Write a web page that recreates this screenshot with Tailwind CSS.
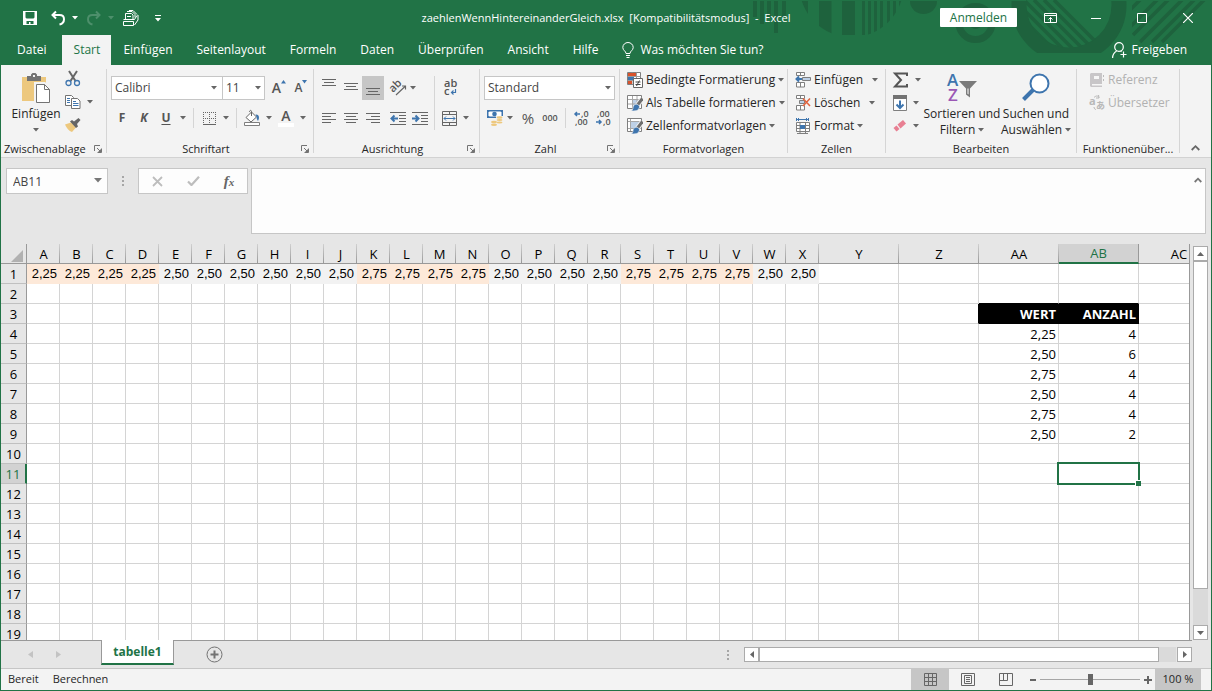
<!DOCTYPE html>
<html lang="de">
<head>
  <meta charset="UTF-8">
  <meta name="viewport" content="width=device-width, initial-scale=1.0">
  <title>zaehlenWennHintereinanderGleich.xlsx - Excel</title>
  <script src="https://cdn.jsdelivr.net/npm/@tailwindcss/browser@4"></script>
</head>
<body class="h-screen flex flex-col overflow-hidden border-x border-b border-[#217346] bg-[#e6e6e6] font-['Open_Sans','Noto_Sans',sans-serif] text-[12px] leading-4 text-[#262626]">

  <!-- Shared icons -->
  <svg class="hidden">
    <symbol id="arrow" viewBox="0 0 6 4"><path d="M0 0h6L3 3.5z" fill="currentColor"/></symbol>
    <symbol id="launcher" viewBox="0 0 8 8"><path d="M.5 6V.5H6M3 3l4 4M7.5 3.500v4h-4" fill="none" stroke="currentColor"/><path d="M7 4v3H4z" fill="currentColor"/></symbol>
    <symbol id="brushgrid" viewBox="0 0 16 16">
      <path d="M.5.5h14v13H.5z" fill="#fff"/>
      <path d="M5 4h6v6H5z" fill="#bdd0e6"/>
      <path d="M.5.5h14v13H.5z" fill="none" stroke="#7f7f7f"/>
      <path d="M1 4.500h13M5.500 1v12M10 1v12M1 9h13" stroke="#a6a6a6"/>
      <path d="M15.500 3.500L10.500 10" stroke="#f1f1f1" stroke-width="5"/>
      <path d="M15.500 3.500L10.500 10" stroke="#6e6e6e" stroke-width="3"/>
      <path d="M11 9.500c-3-1-5 1-5 3.500 0 1.500-.8 2-2 2.500 3 1 8.500.5 8.500-4z" fill="#3e75ae" stroke="#f1f1f1" stroke-width=".6"/>
    </symbol>
    <symbol id="stylegrid" viewBox="0 0 16 16">
      <path d="M.5.5h14v13H.5z" fill="#fff"/>
      <path d="M4 4h8v6H4z" fill="#bdd0e6"/>
      <path d="M.5.5h14v13H.5z" fill="none" stroke="#7f7f7f"/>
      <path d="M1 3.500h13M3.500 1v12M1 10.500h13" stroke="#a6a6a6"/>
      <path d="M15.500 3.500L10.500 10" stroke="#f1f1f1" stroke-width="5"/>
      <path d="M15.500 3.500L10.500 10" stroke="#6e6e6e" stroke-width="3"/>
      <path d="M11 9.500c-3-1-5 1-5 3.500 0 1.500-.8 2-2 2.500 3 1 8.500.5 8.500-4z" fill="#3e75ae" stroke="#f1f1f1" stroke-width=".6"/>
    </symbol>
  </svg>

  <!-- Title bar and tabs -->
  <header class="relative bg-[#217346] text-white shrink-0">
    <svg class="absolute right-0 top-0 w-[461px] h-[65px]" viewBox="750 0 461 65" fill="#1e623d">
      <defs>
        <clipPath id="disc"><path d="M799 1h105v34H799z" /></clipPath>
        <clipPath id="round"><circle cx="851.500" cy="-15" r="52.200"/></clipPath>
        <clipPath id="inner"><circle cx="1069" cy="5" r="43"/></clipPath>
        <clipPath id="flat"><path d="M1000 1h140v52h-140z"/></clipPath>
        <clipPath id="corner"><path d="M1132 1h80v43h-80z"/></clipPath>
      </defs>
      <path d="M753 1h4v16h-4zM760 1h4v23h-4zM767 1h4v16h-4zM774 1h4v32h-4zM782 1h4v16h-4z"/>
      <g clip-path="url(#disc)"><path clip-path="url(#round)" d="M800 0h8v40h-8zM819 0h12.500v40H819zM842 0h13v40h-13zM862 0h3v40h-3zM868 0h3v40h-3zM874 0h3v40h-3zM880 0h3v40h-3zM887 0h3v40h-3zM893 0h3v40h-3zM899 0h3v40h-3z"/></g>
      <path d="M910 1a13.500 13 0 0 0 27 0z"/>
      <circle cx="975.500" cy="23" r="16.500" fill="none" stroke="#1e623d" stroke-width="7"/>
      <circle cx="975.500" cy="23" r="6"/>
      <g clip-path="url(#flat)"><circle cx="1069" cy="5" r="50" fill="none" stroke="#1e623d" stroke-width="15"/></g>
      <g clip-path="url(#inner)" stroke="#1e623d" stroke-width="3.500"><path d="M1004 0l60 60M1014 0l60 60M1024 0l60 60M1034 0l60 60M1044 0l60 60M1054 0l60 60"/></g>
      <g clip-path="url(#corner)" stroke="#1e623d" stroke-width="3.500"><path d="M1130 10L1145-5M1130 27L1165-8M1133 35L1175-7M1140 42L1187-5M1152 42L1198-4M1162 42L1212-8"/></g>
    </svg>
    <div class="relative flex items-center h-[35px]">
      <div class="flex-1 flex items-center">
        <button class="ml-[21px] mr-3" aria-label="Speichern"><svg class="w-4 h-4" viewBox="0 0 16 16"><path d="M1 1h14v14H1z" fill="#fff"/><path d="M3.500 2h9v5.500l-1 1h-7l-1-1zM4.500 11h7v3h-3v-2H7v2H4.500z" fill="#217346"/></svg></button>
        <button aria-label="Rückgängig"><svg class="w-4 h-4" viewBox="0 0 16 16" fill="none" stroke="#fff" stroke-width="2"><path d="M6 1.500L2.500 5 6 8.500M3 5h6.500c6 0 6 8 0 9.500"/></svg></button>
        <svg class="ml-1.5 w-[6px] h-1"><use href="#arrow"/></svg>
        <button class="ml-2 text-[#4d8f6b]" aria-label="Wiederholen"><svg class="w-4 h-4" viewBox="0 0 16 16" fill="none" stroke="currentColor" stroke-width="2"><path d="M10 1.500L13.500 5 10 8.500M13 5H6.500c-6 0-6 8 0 9.500"/></svg></button>
        <svg class="ml-1.5 w-[6px] h-1 text-[#4d8f6b]"><use href="#arrow"/></svg>
        <button class="ml-2" aria-label="Drucken"><svg class="w-[17px] h-4" viewBox="0 0 17 16" fill="none" stroke="#fff"><path d="M1.500 11.500h10v4h-10zM1.500 9.500h11l2.500-4M3.500 9V3.500h6L11 5v4M5 1.500h5l3 3v3M7 .5h4l4 4M16 5v5l-3.500 5M5 6.500h4"/></svg></button>
        <button class="ml-4" aria-label="Anpassen"><svg class="w-[6px] h-2" viewBox="0 0 6 8" fill="#fff"><path d="M0 1h6v1H0zM0 4h6L3 7.500z"/></svg></button>
      </div>
      <h1 class="whitespace-pre text-[11px]">zaehlenWennHintereinanderGleich.xlsx  [Kompatibilitätsmodus]  -  Excel</h1>
      <div class="flex-1 flex items-center justify-end h-full">
        <button class="mr-2.5 w-[77px] h-[19px] bg-white text-[#217346] rounded-[1px] flex items-center justify-center">Anmelden</button>
        <button class="w-[46px] flex justify-center" aria-label="Menüband-Anzeigeoptionen"><svg class="w-[13px] h-[10px]" viewBox="0 0 13 10" fill="none" stroke="#fff"><path d="M.5.5h12v9H.5zM.5 2.500h12M6.500 9V4.500M4.500 6.500l2-2 2 2"/></svg></button>
        <button class="w-[46px] flex justify-center" aria-label="Minimieren"><svg class="w-[10px] h-[10px]" viewBox="0 0 10 10"><path d="M0 5h10v1H0z" fill="#fff"/></svg></button>
        <button class="w-[46px] flex justify-center" aria-label="Maximieren"><svg class="w-[10px] h-[10px]" viewBox="0 0 10 10"><path d="M.5.5h9v9h-9z" fill="none" stroke="#fff"/></svg></button>
        <button class="w-[46px] flex justify-center" aria-label="Schließen"><svg class="w-[10px] h-[10px]" viewBox="0 0 10 10"><path d="M0 0l10 10M10 0L0 10" stroke="#fff" stroke-width="1.200"/></svg></button>
      </div>
    </div>
    <nav class="relative flex items-stretch h-[30px] pl-1 pr-6">
      <a href="#" class="px-3 flex items-center">Datei</a>
      <a href="#" class="ml-1 w-[49px] bg-[#f3f3f3] text-[#217346] flex items-center justify-center">Start</a>
      <a href="#" class="px-3 flex items-center">Einfügen</a>
      <a href="#" class="px-3 flex items-center">Seitenlayout</a>
      <a href="#" class="px-3 flex items-center">Formeln</a>
      <a href="#" class="px-3 flex items-center">Daten</a>
      <a href="#" class="px-3 flex items-center">Überprüfen</a>
      <a href="#" class="px-3 flex items-center">Ansicht</a>
      <a href="#" class="px-3 flex items-center">Hilfe</a>
      <a href="#" class="px-3 flex items-center gap-1.5"><svg class="w-3 h-4" viewBox="0 0 12 16" fill="none" stroke="#fff"><path d="M4 11.500C4 9 .8 8.500.8 5.500a5.200 5 0 0 1 10.400 0C11.200 8.500 8 9 8 11.500zM4 13.500h4M4.500 15.500h3"/></svg>Was möchten Sie tun?</a>
      <a href="#" class="ml-auto flex items-center gap-1"><svg class="w-[15px] h-4" viewBox="0 0 15 16" fill="none" stroke="#fff" stroke-width="1.200"><circle cx="7" cy="5" r="4.300"/><path d="M.6 16c0-3.500 1.500-5.500 4-7M8.500 9l1 .8M11.500 9.500v6M8.500 12.500h6"/></svg>Freigeben</a>
    </nav>
  </header>

  <!-- Ribbon -->
  <div class="flex shrink-0 h-[93px] bg-[#f3f3f3] border-b border-[#d2d2d2] text-[#262626] [&_svg]:shrink-0 [&_svg]:overflow-visible">

    <section class="w-[105px] shrink-0 flex flex-col">
      <div class="flex-1 flex">
        <button class="w-[62px] pl-2 pt-2 flex flex-col items-center">
          <svg class="w-[29px] h-[30px]" viewBox="0 0 29 30"><path d="M0 4h24v24H0z" fill="#edc87e"/><path d="M5 3h4V1.500L10.500 0h3L15 1.500V3h4v5H5z" fill="#737373"/><path d="M11 2h2v2h-2z" fill="#f3f3f3"/><path d="M13.500 10.500h9l5 5v14h-14z" fill="#fff" stroke="#f3f3f3" stroke-width="3"/><path d="M14.500 11.500h8l5 5v13h-13zM22.500 11.500v5h5" fill="#fff" stroke="#737373"/></svg>
          <span class="mt-[3px]">Einfügen</span>
          <svg class="mt-1.5 w-[6px] h-1 text-[#666]"><use href="#arrow"/></svg>
        </button>
        <div class="pt-1.5 pl-0.5 flex flex-col gap-[7px]">
          <button class="w-4 h-4" aria-label="Ausschneiden"><svg class="w-4 h-4" viewBox="0 0 16 16" fill="none"><path d="M4 0l6.500 10M12 0L5.500 10" stroke="#666" stroke-width="2"/><circle cx="3.500" cy="12" r="2.500" stroke="#3e75ae" stroke-width="1.300"/><circle cx="12" cy="12" r="2.500" stroke="#3e75ae" stroke-width="1.300"/></svg></button>
          <button class="h-4 flex items-center gap-1.5" aria-label="Kopieren"><svg class="w-4 h-4" viewBox="0 0 16 16" fill="#fff" stroke="#737373"><path d="M.5 1.500h6l2 2v8h-8z"/><path d="M6.500 4.500h6l2.500 2.500v7.500H6.500z"/><path d="M2 4.500h3M2 6.500h3M2 8.500h3M8 7.500h3M8 9.500h5.500M8 11.500h5.500" stroke="#3e75ae"/></svg><svg class="w-[6px] h-1 text-[#666]"><use href="#arrow"/></svg></button>
          <button class="w-4 h-4" aria-label="Format übertragen"><svg class="w-4 h-4" viewBox="0 0 16 16"><path d="M0 7.500l6-2 5 5L7 15c-3-1-5.500-4-7-7.500z" fill="#edc87e"/><path d="M5 4.500l2-1.500 2 1.500L13.500 1l2 2L12 7l1 2.500-2 1.500z" fill="#666"/></svg></button>
        </div>
      </div>
      <div class="h-4 flex items-center justify-between pl-[3px] pr-1 text-[11px]"><span>Zwischenablage</span><button aria-label="Zwischenablage öffnen"><svg class="w-2 h-2 text-[#737373]"><use href="#launcher"/></svg></button></div>
    </section>
    <div class="w-px my-1 h-[84px] bg-[#d5d5d5] shrink-0"></div>

    <section class="w-[206px] shrink-0 flex flex-col pl-1">
      <div class="flex-1 flex flex-col gap-1.5 pt-[11px]">
        <div class="flex items-center">
          <div class="relative">
            <select aria-label="Schriftart" class="appearance-none block w-[112px] h-6 border border-[#c6c6c6] bg-white pl-[3px] text-[#444]"><option>Calibri</option></select>
            <svg class="absolute right-1.5 top-2.5 w-[6px] h-1 text-[#666]"><use href="#arrow"/></svg></div>
          <div class="relative -ml-px">
            <select aria-label="Schriftgrad" class="appearance-none block w-[43px] h-6 border border-[#c6c6c6] bg-white pl-[3px] text-[#444]"><option>11</option></select>
            <svg class="absolute right-1 top-2.5 w-[6px] h-1 text-[#666]"><use href="#arrow"/></svg></div>
          <button class="ml-1.5 w-4 flex items-start justify-center" aria-label="Schriftgrad vergrößern"><span class="text-[14px] text-[#555] font-semibold">A</span><svg class="w-[5px] h-1" viewBox="0 0 5 4"><path d="M0 3.500h5L2.500 0z" fill="#3e75ae"/></svg></button>
          <button class="ml-1.5 w-4 flex items-start justify-center" aria-label="Schriftgrad verkleinern"><span class="text-[12px] text-[#555] font-semibold">A</span><svg class="w-[5px] h-1" viewBox="0 0 5 4"><path d="M0 0h5L2.500 3.500z" fill="#3e75ae"/></svg></button>
        </div>
        <div class="flex items-center h-6 text-[#555]">
          <button class="w-[22px] font-bold">F</button>
          <button class="w-[22px] font-bold italic">K</button>
          <button class="w-[22px] font-bold underline underline-offset-2">U</button>
          <svg class="mx-[3px] w-[6px] h-1 text-[#666]"><use href="#arrow"/></svg>
          <div class="mx-1 w-px h-5 bg-[#d5d5d5]"></div>
          <button class="w-[22px] flex justify-center" aria-label="Rahmen"><svg class="w-[13px] h-[13px]" viewBox="0 0 13 13" fill="none" stroke="#666"><path d="M.5 0v12M6.500 0v12M12.500 0v12M0 .5h13M0 6.500h13" stroke-dasharray="1 1"/><path d="M0 12.500h13"/></svg></button>
          <svg class="mx-[3px] w-[6px] h-1 text-[#666]"><use href="#arrow"/></svg>
          <div class="mx-1 w-px h-5 bg-[#d5d5d5]"></div>
          <button class="w-[22px] flex justify-center" aria-label="Füllfarbe"><svg class="w-4 h-4" viewBox="0 0 16 16"><path d="M2 7.500L7.500 2l5 5L7 12z" fill="#fff" stroke="#666"/><path d="M7.500 6V1.500C7.500 0 5.500 0 5.500 2" fill="none" stroke="#666"/><path d="M11.500 4.500c3.500-.5 4.500 3 2.500 6.500-1-1-1.500-3-1.500-4.500z" fill="#3e75ae"/><path d="M.5 12.500h15v3H.5z" fill="#fff" stroke="#7f7f7f"/></svg></button>
          <svg class="mx-[3px] w-[6px] h-1 text-[#666]"><use href="#arrow"/></svg>
          <button class="w-[22px] flex flex-col items-center" aria-label="Schriftfarbe"><span class="text-[14px] leading-[14px] font-semibold">A</span><span class="w-4 h-1 bg-white"></span></button>
          <svg class="mx-[3px] w-[6px] h-1 text-[#666]"><use href="#arrow"/></svg>
        </div>
      </div>
      <div class="h-4 flex items-center pr-1 text-[11px]"><span class="flex-1 text-center">Schriftart</span><button aria-label="Schriftart öffnen"><svg class="w-2 h-2 text-[#737373]"><use href="#launcher"/></svg></button></div>
    </section>
    <div class="w-px my-1 h-[84px] bg-[#d5d5d5] shrink-0"></div>

    <section class="w-[165px] shrink-0 flex flex-col pl-1">
      <div class="flex-1 flex pt-[11px]">
        <div class="flex flex-col gap-1.5 w-[116px]">
          <div class="flex items-center h-6">
            <button class="w-[22px] h-6 flex justify-center items-center" aria-label="Oben ausrichten"><svg class="w-[14px] h-[18px]" viewBox="0 0 14 18" stroke="#666"><path d="M0 .5h14M2 3.500h10M0 6.500h14"/></svg></button>
            <button class="w-[22px] h-6 flex justify-center items-center" aria-label="Zentriert ausrichten"><svg class="w-[14px] h-[18px]" viewBox="0 0 14 18" stroke="#666"><path d="M0 4.500h14M2 7.500h10M0 10.500h14"/></svg></button>
            <button class="w-[22px] h-6 bg-[#c6c6c6] flex justify-center items-center" aria-label="Unten ausrichten"><svg class="w-[14px] h-[18px]" viewBox="0 0 14 18" stroke="#666"><path d="M0 9.500h14M2 12.500h10M0 15.500h14"/></svg></button>
            <button class="ml-[5px] w-[18px] flex justify-center" aria-label="Ausrichtung"><svg class="w-[17px] h-[16px]" viewBox="0 0 17 16"><text x="0" y="10" transform="rotate(-45 5 8)" font-size="11" font-weight="600" fill="#555">ab</text><path d="M6 15L15.500 6M12 6h3.500v3.500" fill="none" stroke="#666" stroke-width="1.200"/></svg></button>
            <svg class="ml-[3px] w-[6px] h-1 text-[#666]"><use href="#arrow"/></svg>
          </div>
          <div class="flex items-center h-6">
            <button class="w-[22px] flex justify-center" aria-label="Linksbündig"><svg class="w-[14px] h-[10px]" viewBox="0 0 14 10" stroke="#666"><path d="M0 .5h14M0 3.500h9M0 6.500h14M0 9.500h9"/></svg></button>
            <button class="w-[22px] flex justify-center" aria-label="Zentriert"><svg class="w-[14px] h-[10px]" viewBox="0 0 14 10" stroke="#666"><path d="M0 .5h14M2 3.500h10M0 6.500h14M2 9.500h10"/></svg></button>
            <button class="w-[22px] flex justify-center" aria-label="Rechtsbündig"><svg class="w-[14px] h-[10px]" viewBox="0 0 14 10" stroke="#666"><path d="M0 .5h14M5 3.500h9M0 6.500h14M5 9.500h9"/></svg></button>
            <button class="ml-[3px] w-[22px] flex justify-center" aria-label="Einzug verkleinern"><svg class="w-4 h-[13px]" viewBox="0 0 16 13"><path d="M0 .5h16M9 3.500h7M9 6.500h7M9 9.500h7M0 12.500h16" stroke="#666"/><path d="M8 6.500H2M4.500 3.500l-3 3 3 3" fill="none" stroke="#3e75ae" stroke-width="2"/></svg></button>
            <button class="w-[22px] flex justify-center" aria-label="Einzug vergrößern"><svg class="w-4 h-[13px]" viewBox="0 0 16 13"><path d="M0 .5h16M9 3.500h7M9 6.500h7M9 9.500h7M0 12.500h16" stroke="#666"/><path d="M0 6.500h6M3.500 3.500l3 3-3 3" fill="none" stroke="#3e75ae" stroke-width="2"/></svg></button>
          </div>
        </div>
        <div class="w-px h-[54px] bg-[#d5d5d5]"></div>
        <div class="flex flex-col gap-1.5 pl-1">
          <button class="w-6 h-6 flex justify-center items-center" aria-label="Textumbruch"><svg class="w-[14px] h-[18px]" viewBox="0 0 14 18"><text x="0" y="8" font-size="11" font-weight="600" fill="#555">ab</text><text x="0" y="16" font-size="11" font-weight="600" fill="#555">c</text><path d="M11.500 10v3.500H8M9.500 11.500l-2 2 2 2" fill="none" stroke="#3e75ae" stroke-width="1.200"/></svg></button>
          <button class="h-6 pl-[3px] flex items-center gap-1.5" aria-label="Verbinden und zentrieren"><svg class="w-[15px] h-[15px]" viewBox="0 0 15 15" fill="none" stroke="#666"><path d="M.5.5h14v14H.5zM.5 3.500h14M.5 11.500h14M7.500.5v3M7.500 11.500v3"/><path d="M2 7.500h11M4 5.500l-2 2 2 2M11 5.500l2 2-2 2" stroke="#3e75ae"/></svg><svg class="w-[6px] h-1 text-[#666]"><use href="#arrow"/></svg></button>
        </div>
      </div>
      <div class="h-4 flex items-center pr-1 text-[11px]"><span class="flex-1 text-center">Ausrichtung</span><button aria-label="Ausrichtung öffnen"><svg class="w-2 h-2 text-[#737373]"><use href="#launcher"/></svg></button></div>
    </section>
    <div class="w-px my-1 h-[84px] bg-[#d5d5d5] shrink-0"></div>

    <section class="w-[139px] shrink-0 flex flex-col pl-1">
      <div class="flex-1 flex flex-col gap-1.5 pt-[11px]">
        <div class="relative mr-1">
          <select aria-label="Zahlenformat" class="appearance-none block w-full h-6 border border-[#c6c6c6] bg-white pl-[3px] text-[#444]"><option>Standard</option></select>
          <svg class="absolute right-1 top-2.5 w-[6px] h-1 text-[#666]"><use href="#arrow"/></svg></div>
        <div class="flex items-center h-6 text-[#555]">
          <button class="ml-[3px]" aria-label="Buchhaltungszahlenformat"><svg class="w-4 h-4" viewBox="0 0 16 16"><path d="M0 0h16v8H0z" fill="#3e75ae"/><path d="M1.500 2.500l1-1h11l1 1v3l-1 1h-11l-1-1z" fill="#fff"/><circle cx="7.500" cy="4" r="2.300" fill="#3e75ae"/><path d="M9 6h7v9H3v-4h6z" fill="#f3f3f3"/><g fill="#edc87e"><ellipse cx="12.500" cy="7.500" rx="3" ry="1.300"/><ellipse cx="12.500" cy="10" rx="3" ry="1"/><ellipse cx="12.500" cy="12.500" rx="3" ry="1"/><ellipse cx="7" cy="12" rx="3" ry="1.200"/><ellipse cx="7" cy="14.800" rx="3" ry="1.200"/></g></svg></button>
          <svg class="mx-1 w-[6px] h-1 text-[#666]"><use href="#arrow"/></svg>
          <button class="w-[22px] text-[15px]">%</button>
          <button class="w-[22px] text-[9px] font-semibold">000</button>
          <div class="mx-1 w-px h-5 bg-[#d5d5d5]"></div>
          <button class="w-[22px] flex justify-center" aria-label="Dezimalstelle hinzufügen"><svg class="w-4 h-4" viewBox="0 0 16 16" font-size="9" font-weight="600" fill="#555"><text x="8" y="7">,0</text><text x="2" y="15">,00</text><path d="M7 4H2M4 2L2 4l2 2" fill="none" stroke="#3e75ae" stroke-width="1.500"/></svg></button>
          <button class="w-[22px] flex justify-center" aria-label="Dezimalstelle löschen"><svg class="w-4 h-4" viewBox="0 0 16 16" font-size="9" font-weight="600" fill="#555"><text x="2" y="7">,00</text><text x="8" y="15">,0</text><path d="M1 12h5M4 10l2 2-2 2" fill="none" stroke="#3e75ae" stroke-width="1.500"/></svg></button>
        </div>
      </div>
      <div class="h-4 flex items-center pr-1 text-[11px]"><span class="flex-1 text-center">Zahl</span><button aria-label="Zahl öffnen"><svg class="w-2 h-2 text-[#737373]"><use href="#launcher"/></svg></button></div>
    </section>
    <div class="w-px my-1 h-[84px] bg-[#d5d5d5] shrink-0"></div>

    <section class="w-[167px] shrink-0 flex flex-col">
      <div class="flex-1 flex flex-col pt-[3px] pl-[7px]">
        <button class="h-[23px] flex items-center gap-[3px] whitespace-nowrap"><svg class="w-4 h-4" viewBox="0 0 16 16"><path d="M.5.5h13v12H.5z" fill="#fff" stroke="#7f7f7f"/><path d="M5 .5v12M9.500.5v12M.5 4.500h13M.5 8.500h13" stroke="#9a9a9a"/><path d="M1 1h8v3H1zM1 9h4v3H1z" fill="#d9532c"/><path d="M1 5h6v3H1z" fill="#3e75ae"/><path d="M6.500 6.500h9v9h-9z" fill="#fff" stroke="#666"/><path d="M8.500 10h5M8.500 12.500h5M12.500 8.500l-3 5.500" stroke="#444"/></svg>Bedingte Formatierung<svg class="w-[6px] h-1 text-[#666]"><use href="#arrow"/></svg></button>
        <button class="h-[23px] flex items-center gap-[3px] whitespace-nowrap"><svg class="w-4 h-4"><use href="#brushgrid"/></svg>Als Tabelle formatieren<svg class="w-[6px] h-1 text-[#666]"><use href="#arrow"/></svg></button>
        <button class="h-[23px] flex items-center gap-[3px] whitespace-nowrap"><svg class="w-4 h-4"><use href="#stylegrid"/></svg>Zellenformatvorlagen<svg class="w-[6px] h-1 text-[#666]"><use href="#arrow"/></svg></button>
      </div>
      <div class="h-4 text-center text-[11px]">Formatvorlagen</div>
    </section>
    <div class="w-px my-1 h-[84px] bg-[#d5d5d5] shrink-0"></div>

    <section class="w-[97px] shrink-0 flex flex-col">
      <div class="flex-1 flex flex-col pt-[3px] pl-[7px]">
        <button class="h-[23px] flex items-center gap-[3px]"><svg class="w-4 h-4" viewBox="0 0 16 16" fill="#fff" stroke="#7f7f7f"><path d="M1.500.5h8v3h-8zM5.500.5v3M1.500 10.500h8v4.500h-8zM5.500 10v5"/><path d="M7.500 5.500h8v3h-8z" fill="#bdd0e6"/><path d="M7 7H2M4 4.500L1.500 7 4 9.500" fill="none" stroke="#3e75ae" stroke-width="2"/></svg>Einfügen<svg class="ml-1.5 w-[6px] h-1 text-[#666]"><use href="#arrow"/></svg></button>
        <button class="h-[23px] flex items-center gap-[3px]"><svg class="w-4 h-4" viewBox="0 0 16 16" fill="#fff" stroke="#7f7f7f"><path d="M1.500.5h8v3h-8zM5.500.5v3M1.500 10.500h8v4.500h-8zM5.500 10v5"/><path d="M4.500 5.500h5v3h-5z" fill="#bdd0e6"/><path d="M8 3.500l7 7.500M15 3.500L8 11" stroke="#e0643f" stroke-width="1.600"/></svg>Löschen<svg class="ml-1.5 w-[6px] h-1 text-[#666]"><use href="#arrow"/></svg></button>
        <button class="h-[23px] flex items-center gap-[3px]"><svg class="w-4 h-4" viewBox="0 0 16 16" fill="none"><path d="M1.500 4.500h13v9h-13zM1.500 7.500h13M1.500 10.500h13M5 4.500v11M10.500 4.500v11M2 15.500h11" stroke="#7f7f7f" fill="#fff"/><path d="M5 7h5v4H5z" fill="#3e75ae"/><path d="M1.500 0v3M13.500 0v3M2 1.500h11M4 0L2.500 1.500 4 3M11 0l1.500 1.500L11 3" stroke="#3e75ae"/></svg>Format<svg class="w-[6px] h-1 text-[#666]"><use href="#arrow"/></svg></button>
      </div>
      <div class="h-4 text-center text-[11px]">Zellen</div>
    </section>
    <div class="w-px my-1 h-[84px] bg-[#d5d5d5] shrink-0"></div>

    <section class="w-[190px] shrink-0 flex flex-col">
      <div class="flex-1 flex">
        <div class="flex flex-col pt-[3px] pl-[7px]">
          <button class="h-[23px] flex items-center gap-1.5" aria-label="AutoSumme"><svg class="w-4 h-4" viewBox="0 0 16 16"><path d="M14 4V1.500H2L8 8l-6 6.500h12V12" fill="none" stroke="#555" stroke-width="2"/></svg><svg class="w-[6px] h-1 text-[#666]"><use href="#arrow"/></svg></button>
          <button class="h-[23px] flex items-center gap-1.5" aria-label="Füllbereich"><svg class="w-[14px] h-4" viewBox="0 0 14 16"><path d="M.5 2.500h13v13H.5z" fill="#fff" stroke="#7f7f7f"/><path d="M0 0h14v4H0z" fill="#737373"/><path d="M7 5.500v7M3.500 9.500L7 13l3.500-3.500" fill="none" stroke="#3e75ae" stroke-width="2"/></svg><svg class="w-[6px] h-1 text-[#666]"><use href="#arrow"/></svg></button>
          <button class="h-[23px] flex items-center gap-1.5" aria-label="Löschen"><svg class="w-[14px] h-4" viewBox="0 0 14 16"><path d="M4.500 6.500L10 2l3 3.500-5.500 5z" fill="#e87f92"/><path d="M3.500 7.500L.5 10l3 3.500 3-2.500z" fill="#e87f92"/></svg><svg class="w-[6px] h-1 text-[#666]"><use href="#arrow"/></svg></button>
        </div>
        <button class="w-[82px] pt-2 flex flex-col items-center whitespace-nowrap">
          <svg class="w-[30px] h-[29px]" viewBox="0 0 30 29"><text x="0" y="13" font-size="17" font-weight="600" fill="#3e75ae">A</text><text x="1" y="28" font-size="17" font-weight="600" fill="#9b57b5">Z</text><path d="M12 8h18l-7 7.500v9l-4-3v-6z" fill="#7a7a7a"/><path d="M20.500 15.500h1v6l-1-.8z" fill="#fff"/></svg>
          <span class="mt-1">Sortieren und</span><span class="flex items-center gap-[3px]">Filtern<svg class="w-[6px] h-1 text-[#666]"><use href="#arrow"/></svg></span>
        </button>
        <button class="w-[66px] pt-2 flex flex-col items-center whitespace-nowrap">
          <svg class="w-[28px] h-[29px]" viewBox="0 0 28 29"><path d="M11 17L1.500 26.500" stroke="#3e75ae" stroke-width="4"/><circle cx="17.500" cy="10.500" r="9" fill="#fff" stroke="#3e75ae" stroke-width="2"/></svg>
          <span class="mt-1">Suchen und</span><span class="flex items-center gap-[3px]">Auswählen<svg class="w-[6px] h-1 text-[#666]"><use href="#arrow"/></svg></span>
        </button>
      </div>
      <div class="h-4 text-center text-[11px]">Bearbeiten</div>
    </section>
    <div class="w-px my-1 h-[84px] bg-[#d5d5d5] shrink-0"></div>

    <section class="w-[102px] shrink-0 flex flex-col">
      <div class="flex-1 flex flex-col pt-[3px] pl-3 text-[#b1b1b1]">
        <button class="h-[23px] flex items-center gap-[3px]" disabled><svg class="w-4 h-4" viewBox="0 0 16 16"><path d="M1 2l1-1h11v14H2l-1-1z" fill="#c8c6c8"/><path d="M5 4h5v3H5zM3 12h10v1.500H3z" fill="#f6f6f6"/><path d="M14 3h1v2h-1zM14 7h1v2h-1z" fill="#bbb"/></svg>Referenz</button>
        <button class="h-[23px] flex items-center gap-[3px]" disabled><svg class="w-4 h-4" viewBox="0 0 16 16"><text x="0" y="10" font-size="11" font-weight="700" fill="#b8b8b8">a</text><path d="M5 2.500c2-2 4-2 5 0M9.500 0L10 3H7M7 14.500c-1 0-2-1-2-2.500" fill="none" stroke="#b8b8b8"/><text x="7" y="14" font-size="9" font-weight="700" fill="#b8b8b8" font-family="Noto Sans CJK JP">あ</text></svg>Übersetzer</button>
      </div>
      <div class="h-4 text-center whitespace-nowrap text-[11px]">Funktionenüber...</div>
    </section>
    <div class="w-px my-1 h-[84px] bg-[#d5d5d5] shrink-0"></div>
    <div class="flex-1 flex justify-center items-end pb-1.5"><button aria-label="Menüband reduzieren"><svg class="w-[9px] h-[6px]" viewBox="0 0 9 6"><path d="M.7 5l3.800-3.800L8.300 5" fill="none" stroke="#666" stroke-width="1.800"/></svg></button></div>
  </div>

  <!-- Formula bar -->
  <div class="flex shrink-0 items-start pt-2.5 pl-[5px] pr-[5px] h-[86px]">
    <div class="relative">
      <input type="text" value="AB11" aria-label="Namenfeld" class="block w-[102px] h-[26px] border border-[#c6c6c6] bg-[#fdfdfd] px-1.5 text-[#444]">
      <svg class="absolute right-1.5 top-2.5 w-2 h-[5px] text-[#777]" viewBox="0 0 8 5"><path d="M0 0h8L4 4.500z" fill="currentColor"/></svg></div>
    <svg class="ml-[14px] mt-2 w-[2px] h-[10px]" viewBox="0 0 2 10" fill="#a6a6a6"><path d="M0 0h2v2H0zM0 4h2v2H0zM0 8h2v2H0z"/></svg>
    <div class="ml-[14px] flex w-[110px] h-[26px] border border-[#c6c6c6] bg-[#fdfdfd]">
      <button class="flex-1 flex items-center justify-center" aria-label="Abbrechen"><svg class="w-[11px] h-[11px]" viewBox="0 0 11 11"><path d="M1 1l9 9M10 1l-9 9" stroke="#bdbdbd" stroke-width="1.800"/></svg></button>
      <button class="flex-1 flex items-center justify-center" aria-label="Eingeben"><svg class="w-[13px] h-[10px]" viewBox="0 0 13 10"><path d="M1 5.500L4.500 9 12 .8" fill="none" stroke="#bdbdbd" stroke-width="2.200"/></svg></button>
      <button class="flex-1 font-['Liberation_Serif',serif] italic font-bold text-[15px] text-[#666]" aria-label="Funktion einfügen">f<span class="text-[11px]">x</span></button>
    </div>
    <div class="relative ml-[3px] flex-1">
      <textarea aria-label="Bearbeitungsleiste" class="block w-full h-[66px] resize-none border border-[#c6c6c6] bg-[#fdfdfd]"></textarea>
      <svg class="absolute right-1 top-[9px] w-[8px] h-[6px]" viewBox="0 0 8 6"><path d="M.7 5L4 1.700 7.300 5" fill="none" stroke="#777" stroke-width="1.800"/></svg>
    </div>
  </div>

  <!-- Worksheet -->
  <main class="flex-1 min-h-0 flex">
    <div class="flex-1 min-w-0 overflow-hidden border-r border-[#999]">
      <table class="table-fixed w-[1218px] border-separate border-spacing-0 text-[13px] leading-[17px] text-black bg-white">
        <colgroup id="cols"></colgroup>
        <thead><tr id="head"></tr></thead>
        <tbody id="grid"></tbody>
      </table>
    </div>
    <div class="w-[21px] pl-[3px] pt-0.5 pr-[3px] shrink-0 flex flex-col">
      <button class="h-[15px] w-[15px] border border-[#ababab] bg-white flex items-center justify-center" aria-label="Nach oben"><svg class="w-[7px] h-1" viewBox="0 0 7 4"><path d="M0 4h7L3.500 0z" fill="#666"/></svg></button>
      <div class="flex-1 w-[15px] bg-[#dadada]"><div class="w-full h-[90%] border border-[#ababab] bg-white"></div></div>
      <button class="h-[15px] w-[15px] border border-[#ababab] bg-white flex items-center justify-center" aria-label="Nach unten"><svg class="w-[7px] h-1" viewBox="0 0 7 4"><path d="M0 0h7L3.500 4z" fill="#666"/></svg></button>
    </div>
  </main>

  <!-- Sheet tabs -->
  <div class="flex shrink-0 h-[28px]">
    <div class="flex-1 flex border-t border-[#999]">
      <div class="w-[100px] flex items-center gap-[23px] pl-[27px]">
        <button aria-label="Vorheriges Blatt"><svg class="w-[5px] h-[7px]" viewBox="0 0 5 7"><path d="M5 0v7L0 3.500z" fill="#c3c3c3"/></svg></button>
        <button aria-label="Nächstes Blatt"><svg class="w-[5px] h-[7px]" viewBox="0 0 5 7"><path d="M0 0v7l5-3.500z" fill="#c3c3c3"/></svg></button>
      </div>
      <button class="-mt-px w-[73px] h-[25px] pt-px bg-white border-x border-x-[#999] border-b-2 border-b-[#217346] text-[#217346] font-bold text-[12px]">tabelle1</button>
      <button class="ml-8 self-center" aria-label="Neues Blatt"><svg class="w-[17px] h-[17px]" viewBox="0 0 17 17" fill="none" stroke="#737373"><circle cx="8.500" cy="8.500" r="7.500"/><path d="M8.500 4.500v8M4.500 8.500h8" stroke-width="2"/></svg></button>
      <div class="ml-auto flex items-center">
        <svg class="mr-[15px] w-[2px] h-[10px]" viewBox="0 0 2 10" fill="#a6a6a6"><path d="M0 0h2v2H0zM0 4h2v2H0zM0 8h2v2H0z"/></svg>
        <button class="h-[15px] w-[15px] border border-[#ababab] bg-white flex items-center justify-center" aria-label="Nach links"><svg class="w-1 h-[7px]" viewBox="0 0 4 7"><path d="M4 0v7L0 3.500z" fill="#666"/></svg></button>
        <div class="w-[417px] h-[15px] bg-[#dadada]"><div class="w-[96%] h-full border border-[#ababab] bg-white"></div></div>
        <button class="ml-px h-[15px] w-[15px] border border-[#ababab] bg-white flex items-center justify-center" aria-label="Nach rechts"><svg class="w-1 h-[7px]" viewBox="0 0 4 7"><path d="M0 0v7l4-3.500z" fill="#666"/></svg></button>
      </div>
    </div>
    <div class="w-[19px] shrink-0"></div>
  </div>

  <!-- Status bar -->
  <footer class="flex items-stretch shrink-0 h-[22px] pl-[7px] pr-2.5 bg-[#f3f3f3] border-t border-[#c6c6c6] text-[11px]">
    <div class="flex items-center gap-3.5 pb-px"><span>Bereit</span><span>Berechnen</span></div>
    <div class="ml-auto flex items-stretch">
      <button class="w-[38px] bg-[#c6c6c6] flex items-center justify-center" aria-label="Normal"><svg class="w-[13px] h-[13px]" viewBox="0 0 13 13" fill="none" stroke="#666"><path d="M.5.5h12v12H.5zM4.500.5v12M8.500.5v12M.5 4.500h12M.5 8.500h12"/></svg></button>
      <button class="w-[38px] flex items-center justify-center" aria-label="Seitenlayout"><svg class="w-[14px] h-[13px]" viewBox="0 0 14 13" fill="none" stroke="#666"><path d="M.5.5h13v12H.5zM3.500 2.500h7v8h-7zM5 4.500h4M5 6.500h4M5 8.500h4"/></svg></button>
      <button class="w-[38px] flex items-center justify-center" aria-label="Umbruchvorschau"><svg class="w-[14px] h-[13px]" viewBox="0 0 14 13" fill="none" stroke="#666"><path d="M.5.5h13v12H.5zM.5 7.500h8v-7M4.500.5v7"/></svg></button>
      <button class="ml-[5px] self-center" aria-label="Verkleinern"><svg class="w-[6px] h-[8px]" viewBox="0 0 6 8"><path d="M0 3h6v2H0z" fill="#666"/></svg></button>
      <input type="range" min="0" max="100" value="50" aria-label="Zoom" class="mx-1 w-[100px] self-center appearance-none bg-transparent h-3 [&::-webkit-slider-runnable-track]:h-px [&::-webkit-slider-runnable-track]:bg-[#a6a6a6] [&::-webkit-slider-thumb]:appearance-none [&::-webkit-slider-thumb]:w-[5px] [&::-webkit-slider-thumb]:h-[11px] [&::-webkit-slider-thumb]:-mt-[5px] [&::-webkit-slider-thumb]:bg-[#666]">
      <button class="self-center" aria-label="Vergrößern"><svg class="w-[8px] h-[8px]" viewBox="0 0 8 8"><path d="M0 3h8v2H0zM3 0h2v8H3z" fill="#666"/></svg></button>
      <button class="ml-[3px] w-[46px] pb-0.5 bg-[#c6c6c6]">100 %</button>
    </div>
  </footer>

<script>
  const columns = 'A B C D E F G H I J K L M N O P Q R S T U V W X Y Z AA AB AC'.split(' ');
  const rowCount = 19;
  const active = { col: 'AB', row: 11 };

  // Runs of equal values in row 1
  const runs = [['2,25', 4], ['2,50', 6], ['2,75', 4], ['2,50', 4], ['2,75', 4], ['2,50', 2]];

  const cells = {};
  let index = 0;
  runs.forEach(([value, count], r) => {
    for (let i = 0; i < count; i++) {
      cells[columns[index++] + 1] = {
        text: value,
        style: r % 2 === 0
          ? "pt-px align-top bg-[#fde9d9] border-[#fde9d9] font-['Liberation_Sans',sans-serif]"
          : "pt-px align-top bg-[#f2f2f2] border-[#f2f2f2] font-['Liberation_Sans',sans-serif]"
      };
    }
    cells['AA' + (r + 4)] = { text: value };
    cells['AB' + (r + 4)] = { text: count };
  });
  cells.AA3 = { text: 'WERT', style: 'pt-0.5 bg-black text-white border-black font-bold' };
  cells.AB3 = { text: 'ANZAHL', style: 'pt-0.5 bg-black text-white border-black font-bold' };
  cells.Z3 = { text: '', style: 'border-b-[#d4d4d4] border-r-black' };
  cells.AA2 = { text: '', style: 'border-r-[#d4d4d4] border-b-black' };
  cells.AB2 = cells.AA2;

  // Column widths
  document.getElementById('cols').innerHTML = '<col class="w-[26px]">' +
    columns.map((c, i) => i < 24 ? '<col class="w-[33px]">' : '<col class="w-20">').join('');

  // Header row
  document.getElementById('head').innerHTML =
    '<th class="h-5 p-0 bg-[#e6e6e6] border-b border-r border-[#999]"><svg class="ml-auto mr-[3px] mt-1 w-3 h-3" viewBox="0 0 12 12"><path d="M12 0v12H0z" fill="#b1b1b1"/></svg></th>' +
    columns.map(c => c === active.col
      ? '<th class="h-5 p-0 pt-px font-normal bg-[#d2d2d2] text-[#217346] border-b-2 border-b-[#217346] border-r border-r-[#999]">' + c + '</th>'
      : '<th class="h-5 p-0 pt-0.5 font-normal bg-[#e6e6e6] border-b border-[#999] bg-[linear-gradient(#d0d0d0,#999)] bg-[length:1px_100%] bg-right bg-no-repeat">' + c + '</th>'
    ).join('');

  // Body rows
  let html = '';
  for (let row = 1; row <= rowCount; row++) {
    html += '<tr>';
    html += row === active.row
      ? '<th class="h-5 p-0 pt-0.5 font-normal bg-[#d2d2d2] text-[#217346] border-b border-b-[#c0c0c0] border-r-2 border-r-[#217346]">' + row + '</th>'
      : '<th class="h-5 p-0 pt-0.5 font-normal bg-[#e6e6e6] border-b border-b-[#c0c0c0] border-r border-r-[#999]">' + row + '</th>';
    for (const col of columns) {
      const cell = cells[col + row] || { text: '' };
      if (col === active.col && row === active.row) {
        html += '<td class="relative h-5 p-0 border-r border-b border-[#d4d4d4]">' +
          '<div class="absolute -inset-[2px] border-2 border-[#217346]"></div>' +
          '<div class="absolute -right-[3px] -bottom-[3px] w-[6px] h-[6px] border-l border-t border-white bg-[#217346]"></div></td>';
      } else {
        html += '<td class="h-5 pb-0 pl-0 pr-[2px] text-right border-r border-b ' + (cell.style || 'pt-0.5 border-[#d4d4d4]') + '">' + cell.text + '</td>';
      }
    }
    html += '</tr>';
  }
  document.getElementById('grid').innerHTML = html;
</script>
</body>
</html>
